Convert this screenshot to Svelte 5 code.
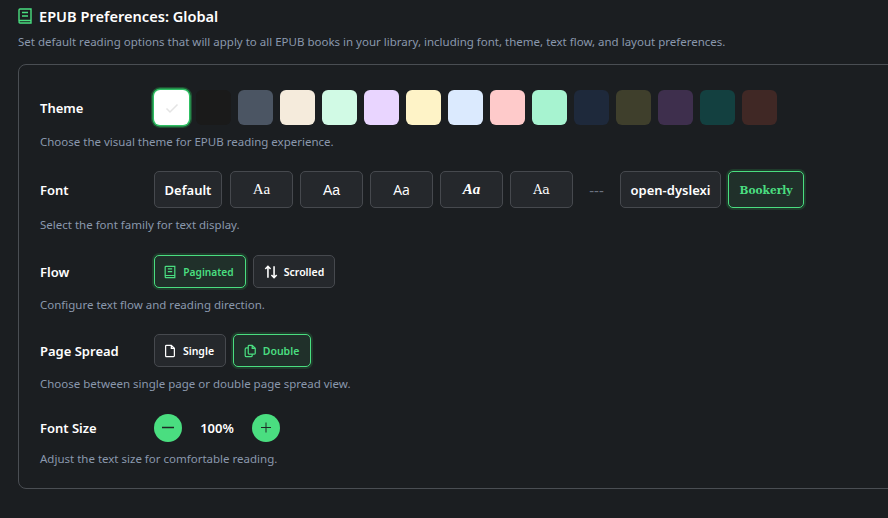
<script>
  const themes = [
    "#ffffff", "#1a1a1a", "#4b5563", "#f5ebdc", "#d1fae5",
    "#e9d5ff", "#fef3c7", "#dbeafe", "#fecaca", "#a7f3d0",
    "#1e293b", "#3f3f2c", "#3e2f4d", "#134040", "#402825"
  ];
  const faces = ["f-serif", "f-sans", "f-inter", "f-italic", "f-mono"];
</script>

<div class="page">
  <h1>
    <svg class="head-icon" viewBox="0 0 14 16" aria-hidden="true">
      <path d="M1 13V2C1 1.400 1.400 1 2 1H13V15H2C1.400 15 1 14.600 1 14C1 13 1.400 12.500 2 12.500H13" />
      <path d="M4 4.500H10M4 8H10" />
    </svg>
    EPUB Preferences: Global
  </h1>
  <p class="intro">Set default reading options that will apply to all EPUB books in your library, including font, theme, text flow, and layout preferences.</p>

  <section class="card">
    <div class="row">
      <div class="line">
        <span class="label">Theme</span>
        <div class="swatches">
          {#each themes as color, i}
            <button class="swatch" class:picked={i === 0} style="background: {color}" aria-label="Theme {i + 1}">
              {#if i === 0}
                <svg viewBox="0 0 16 16" aria-hidden="true"><path d="M2.500 8.500L6 12L13.500 4.500" /></svg>
              {/if}
            </button>
          {/each}
        </div>
      </div>
      <p class="desc">Choose the visual theme for EPUB reading experience.</p>
    </div>

    <div class="row">
      <div class="line">
        <span class="label">Font</span>
        <div class="options fonts">
          <button class="opt font-opt default">Default</button>
          {#each faces as face}
            <button class="opt font-opt aa {face}">Aa</button>
          {/each}
          <span class="sep">---</span>
          <button class="opt font-opt dyslexic">open-dyslexi</button>
          <button class="opt font-opt bookerly on">Bookerly</button>
        </div>
      </div>
      <p class="desc">Select the font family for text display.</p>
    </div>

    <div class="row">
      <div class="line">
        <span class="label">Flow</span>
        <div class="options">
          <button class="opt small on pag">
            <svg viewBox="0 0 16 16" aria-hidden="true">
              <path d="M2.500 12.500V2.500C2.500 1.900 2.900 1.500 3.500 1.500H13.500V14.500H3.500C2.900 14.500 2.500 14.100 2.500 13.500C2.500 12.900 2.900 12 3.500 12H13.500" />
              <path d="M5.500 4.500H10.500M5.500 7.500H10.500" />
            </svg>
            Paginated
          </button>
          <button class="opt small scr">
            <svg viewBox="0 0 16 16" aria-hidden="true">
              <path d="M4.500 14.500V1.500M1.500 4.500L4.500 1.500L7.500 4.500M11.500 1.500V14.500M8.500 11.500L11.500 14.500L14.500 11.500" />
            </svg>
            Scrolled
          </button>
        </div>
      </div>
      <p class="desc">Configure text flow and reading direction.</p>
    </div>

    <div class="row">
      <div class="line">
        <span class="label">Page Spread</span>
        <div class="options">
          <button class="opt small sgl">
            <svg viewBox="0 0 16 16" aria-hidden="true">
              <path d="M3 2.500C3 1.900 3.400 1.500 4 1.500H9.500L13 5V13.500C13 14.100 12.600 14.500 12 14.500H4C3.400 14.500 3 14.100 3 13.500ZM9.500 1.500V5H13" />
            </svg>
            Single
          </button>
          <button class="opt small on dbl">
            <svg viewBox="0 0 16 16" aria-hidden="true">
              <path d="M7 1.500H10.500L14 5V10.500C14 11.100 13.600 11.500 13 11.500H7C6.400 11.500 6 11.100 6 10.500V2.500C6 1.900 6.400 1.500 7 1.500ZM10.500 1.500V5H14" />
              <path d="M6 4.500H4C3 4.500 2.500 5 2.500 6V13C2.500 14 3 14.500 4 14.500H9C10 14.500 10.500 14 10.500 13V11.500" />
            </svg>
            Double
          </button>
        </div>
      </div>
      <p class="desc">Choose between single page or double page spread view.</p>
    </div>

    <div class="row last">
      <div class="line">
        <span class="label">Font Size</span>
        <div class="stepper">
          <button class="round minus" aria-label="Smaller">
            <svg viewBox="0 0 16 16" aria-hidden="true"><path d="M2 7.500H14" /></svg>
          </button>
          <span class="value">100%</span>
          <button class="round" aria-label="Larger">
            <svg viewBox="0 0 16 16" aria-hidden="true"><path d="M3 7.500H13M8 2.500V12.500" /></svg>
          </button>
        </div>
      </div>
      <p class="desc">Adjust the text size for comfortable reading.</p>
    </div>
  </section>
</div>

<style>
  :global(body) {
    background: #1b1e21;
    overflow: hidden;
  }

  .page {
    height: 518px;
    overflow: hidden;
    padding: 6px 0 0 18px;
    box-sizing: border-box;
    font-family: "Noto Sans", sans-serif;
    color: #fff;
  }

  h1 {
    display: flex;
    align-items: center;
    gap: 7px;
    margin: 0;
    font-size: 14.600px;
    line-height: 20px;
    font-weight: 600;
  }

  .head-icon {
    width: 14px;
    height: 16px;
    flex: none;
    fill: none;
    stroke: #4ade80;
    stroke-width: 1.400;
  }

  .intro {
    margin: 7px 0 0;
    font-size: 11.500px;
    line-height: 18px;
    color: #8a98ad;
    white-space: nowrap;
  }

  .card {
    margin: 13px -40px 0 0;
    padding: 25px 21px 21px;
    border: 1px solid #4a4e53;
    border-radius: 8px;
  }

  .row {
    margin-bottom: 21px;
  }

  .row:nth-child(even) {
    margin-bottom: 22px;
  }

  .row.last {
    margin-bottom: 0;
  }

  .line {
    display: flex;
    align-items: center;
  }

  .label {
    width: 114px;
    flex: none;
    font-size: 13px;
    font-weight: 600;
  }

  .desc {
    margin: 8px 0 0;
    font-size: 11.500px;
    line-height: 17px;
    color: #8a98ad;
  }

  .swatches {
    display: flex;
    gap: 7px;
  }

  .swatch {
    width: 35px;
    height: 35px;
    padding: 0;
    border: 0;
    border-radius: 6px;
    display: flex;
    align-items: center;
    justify-content: center;
  }

  .swatch svg {
    width: 16px;
    height: 16px;
    fill: none;
    stroke: #e4e4e4;
    stroke-width: 1.500;
  }

  .swatch.picked {
    box-shadow: 0 0 0 1.500px #2fbf63, 0 0 0 3px #1f5132;
  }

  .options {
    display: flex;
    align-items: center;
    gap: 7px;
  }

  .opt {
    display: flex;
    align-items: center;
    justify-content: center;
    box-sizing: border-box;
    padding: 0;
    background: #25282c;
    border: 1px solid #46494e;
    border-radius: 5px;
    color: #fff;
    font-family: "Noto Sans", sans-serif;
    font-weight: 600;
  }

  .opt.on {
    background: #20302a;
    border-color: #4ade80;
    color: #4ade80;
    box-shadow: 0 0 0 2px #1f3a2b;
  }

  .font-opt {
    height: 37px;
    font-size: 13px;
  }

  .default { width: 68px; margin-right: 1px; }
  .aa { width: 63px; font-weight: 400; }
  .f-serif { font-family: "Liberation Serif", serif; font-size: 15px; }
  .f-sans { font-family: "Liberation Sans", sans-serif; font-size: 14px; }
  .f-inter { font-family: "Open Sans", sans-serif; font-size: 14px; }
  .f-italic { font-family: "Liberation Serif", serif; font-style: italic; font-size: 15px; font-weight: 700; }
  .f-mono { font-family: "DejaVu Serif", serif; font-size: 12.500px; }
  .dyslexic { width: 101px; }
  .bookerly { width: 76px; font-family: "DejaVu Serif", serif; font-stretch: condensed; font-size: 11.800px; }

  .sep {
    width: 33px;
    text-align: center;
    color: #6b7280;
    font-size: 15px;
  }

  .small {
    height: 33px;
    gap: 6px;
    font-size: 10.500px;
  }

  .small svg {
    width: 14px;
    height: 14px;
    fill: none;
    stroke: currentColor;
    stroke-width: 1.400;
  }

  .scr svg {
    stroke-width: 1.800;
  }

  .pag { width: 92px; padding-right: 3px; font-size: 10.200px; }
  .scr { width: 82px; }
  .sgl { width: 72px; padding-right: 3px; }
  .dbl { width: 78px; padding-right: 2px; }

  .stepper {
    display: flex;
    align-items: center;
  }

  .round {
    width: 28px;
    height: 28px;
    padding: 0;
    border: 0;
    border-radius: 50%;
    background: #4ade80;
    display: flex;
    align-items: center;
    justify-content: center;
  }

  .round svg {
    width: 16px;
    height: 16px;
    fill: none;
    stroke: #1f2a25;
    stroke-width: 1;
  }

  .round.minus svg {
    stroke-width: 1.500;
  }

  .value {
    width: 70px;
    text-align: center;
    font-size: 13px;
    font-weight: 600;
  }
</style>
